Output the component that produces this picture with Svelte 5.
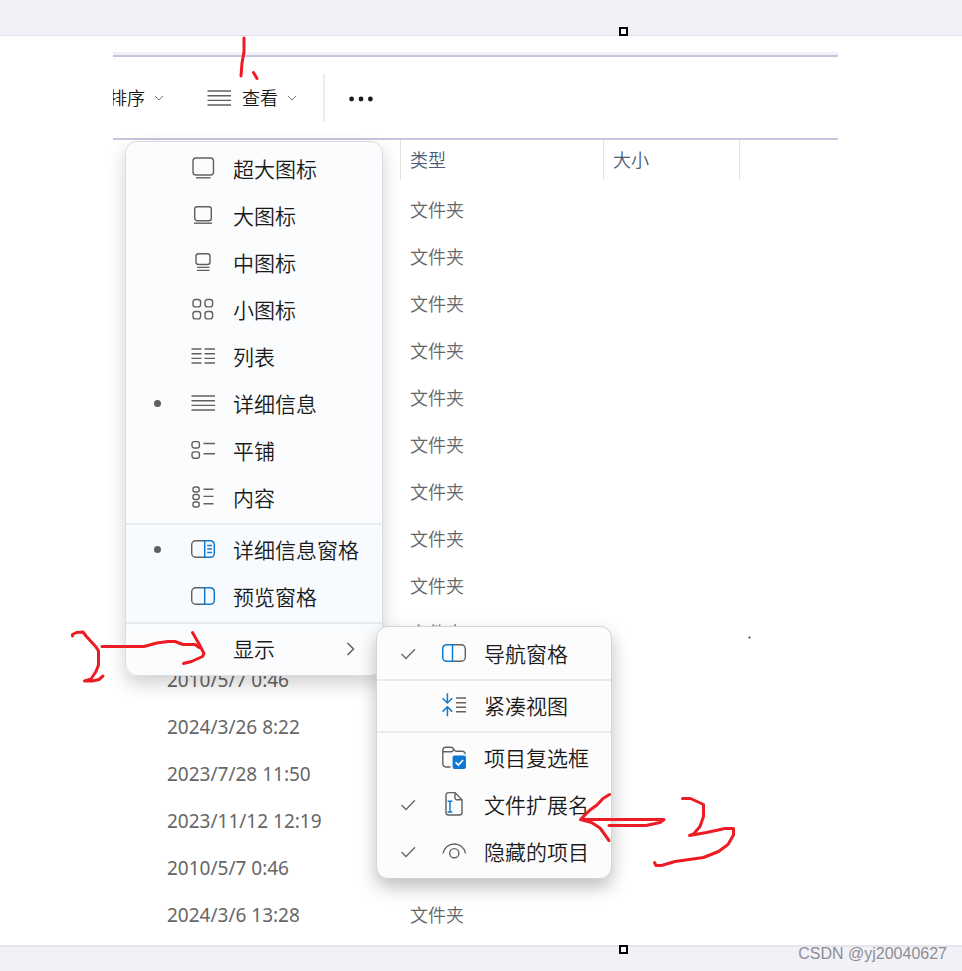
<script lang="ts">
  interface Row {
    date: string;
    type: string;
  }

  interface MenuEntry {
    id: string;
    label: string;
  }

  const dates = ['2010/5/7 0:46', '2024/3/26 8:22', '2023/7/28 11:50', '2023/11/12 12:19', '2010/5/7 0:46', '2024/3/6 13:28'];

  const rows: Row[] = [
    ...Array.from({ length: 10 }, () => ({ date: '', type: '文件夹' })),
    ...dates.map((date) => ({ date, type: '文件夹' })),
  ];

  const layouts: MenuEntry[] = [
    { id: 'extra-large', label: '超大图标' },
    { id: 'large', label: '大图标' },
    { id: 'medium', label: '中图标' },
    { id: 'small', label: '小图标' },
    { id: 'list', label: '列表' },
    { id: 'details', label: '详细信息' },
    { id: 'tiles', label: '平铺' },
    { id: 'content', label: '内容' },
  ];

  const panes: MenuEntry[] = [
    { id: 'details-pane', label: '详细信息窗格' },
    { id: 'preview-pane', label: '预览窗格' },
  ];

  const showGroups: MenuEntry[][] = [
    [{ id: 'nav-pane', label: '导航窗格' }],
    [{ id: 'compact', label: '紧凑视图' }],
    [
      { id: 'checkboxes', label: '项目复选框' },
      { id: 'extensions', label: '文件扩展名' },
      { id: 'hidden-items', label: '隐藏的项目' },
    ],
  ];

  let layout = $state('details');
  let pane = $state('details-pane');
  let shown: Record<string, boolean> = $state({ 'nav-pane': true, extensions: true, 'hidden-items': true });
  let menuOpen = $state(true);
  let submenuOpen = $state(true);

  function togglePane(id: string) {
    pane = pane === id ? '' : id;
  }
</script>

{#snippet chevronDown()}
  <svg class="chevron" viewBox="0 0 10 10" aria-hidden="true"><path d="M1 3l4 4 4-4" /></svg>
{/snippet}

{#snippet icon(name: string)}
  <svg class="icon" viewBox="0 0 25 25" aria-hidden="true">
    {#if name === 'extra-large'}
      <rect x="2" y="1" width="20.5" height="17" rx="3" />
      <path d="M5 20.8h14.5" />
    {:else if name === 'large'}
      <rect x="3.7" y="2.7" width="16.6" height="14" rx="2.5" />
      <path d="M3 19.2h18" />
    {:else if name === 'medium'}
      <rect x="5" y="2.7" width="14" height="10.8" rx="2.5" />
      <path d="M6 16.4h12.5M6 19.4h12.5" />
    {:else if name === 'small'}
      <rect x="2" y="1.5" width="7.6" height="7.4" rx="2.4" />
      <rect x="14" y="1.5" width="7.6" height="7.4" rx="2.4" />
      <rect x="2" y="13.5" width="7.6" height="7.4" rx="2.4" />
      <rect x="14" y="13.5" width="7.6" height="7.4" rx="2.4" />
    {:else if name === 'list'}
      <path d="M.5 4h10M.5 8.7h10M.5 13.4h10M.5 18h10M13.5 4h10.5M13.5 8.7h10.5M13.5 13.4h10.5M13.5 18h10.5" />
    {:else if name === 'details'}
      <path d="M.5 4h23.5M.5 8.7h23.5M.5 13.4h23.5M.5 18h23.5" />
    {:else if name === 'tiles'}
      <rect x="1" y="2.6" width="7.4" height="6.4" rx="2.2" />
      <rect x="1" y="12.9" width="7.4" height="6.4" rx="2.2" />
      <path d="M12.5 4.5H24M12.5 14.7H24" />
    {:else if name === 'content'}
      <rect x="2" y="1" width="6.2" height="5" rx="2" />
      <rect x="2" y="8.5" width="6.2" height="5" rx="2" />
      <rect x="2" y="16" width="6.2" height="5" rx="2" />
      <path d="M12.5 3.2h10M12.5 10.4h10M12.5 17.8h10" />
    {:else if name === 'details-pane' || name === 'preview-pane'}
      <path d="M13.7 2.7H4.7a4 4 0 0 0-4 4v8.6a4 4 0 0 0 4 4h9" />
      <path class="blue" d="M13.7 2.7h5.6a4 4 0 0 1 4 4v8.6a4 4 0 0 1-4 4h-5.6z" />
      {#if name === 'details-pane'}
        <path class="blue" d="M16.2 7.4h4.8M16.2 11h4.8M16.2 14.6h4.8" />
      {/if}
    {:else if name === 'nav-pane'}
      <path d="M10.5 2.7h8.8a4 4 0 0 1 4 4v8.6a4 4 0 0 1-4 4h-8.8" />
      <path class="blue" d="M10.5 2.7H4.7a4 4 0 0 0-4 4v8.6a4 4 0 0 0 4 4h5.8z" />
    {:else if name === 'compact'}
      <path class="blue" d="M5.4-.8v9.6M.6 4.2l4.8 4.8 4.8-4.8M5.4 22.3v-9.4M.6 17.6l4.8-4.8 4.8 4.8" />
      <path d="M14 4h10M14 8.7h10M14 13.3h10M14 17.8h10" />
    {:else if name === 'checkboxes'}
      <path d="M8.5 21H4.2A3.4 3.4 0 0 1 .8 17.6V4.2A3 3 0 0 1 3.8 1.2h5c1 0 1.6.3 2.2 1L13 4.6c.4.5.8.7 1.5.7h5.8a3 3 0 0 1 3 3" />
      <path d="M.8 5.8h8c1 0 1.5-.2 2-.8l1.200-1.200" />
      <rect class="tick-box" x="10.6" y="9.6" width="13.4" height="13.4" rx="2" />
      <path class="tick" d="M13.5 16.2l2.8 2.8 4.8-5" />
    {:else if name === 'extensions'}
      <path d="M13-.4H6.500a2.500 2.500 0 0 0-2.500 2.500v17.400A2.500 2.500 0 0 0 6.500 22h11a2.500 2.500 0 0 0 2.500-2.500V6.800zv5a2.200 2.200 0 0 0 2.200 2.200H20" />
      <path class="blue" d="M8 8.5v10.3M5.6 8.200h4.800M5.600 19h4.800" />
    {:else if name === 'hidden-items'}
      <path d="M1 13.4C2.200 7.600 6.800 4 12.300 4s10.100 3.600 11.300 9.400" />
      <circle cx="12.3" cy="13.2" r="4.6" />
    {/if}
  </svg>
{/snippet}

{#snippet check()}
  <svg class="check" viewBox="0 0 16 12" aria-hidden="true"><path d="M1.5 6l4.5 4.5 9-9.3" /></svg>
{/snippet}

<div class="page">
  <div class="band top">
    <span class="handle"></span>
  </div>

  <main class="shot">
    <div class="explorer">
      <div class="toolbar">
        <button class="tool sort"><span class="label">排序</span>{@render chevronDown()}</button>
        <button class="tool view" aria-haspopup="menu" aria-expanded={menuOpen} onclick={() => (menuOpen = !menuOpen)}>
          {@render icon('details')}
          <span class="label">查看</span>
          {@render chevronDown()}
        </button>
        <button class="tool more" aria-label="更多">
          <svg viewBox="0 0 24 6" aria-hidden="true">
            <circle cx="2.6" cy="3" r="2.4" />
            <circle cx="12" cy="3" r="2.4" />
            <circle cx="21.4" cy="3" r="2.4" />
          </svg>
        </button>
      </div>

      <div class="files">
        <table>
          <colgroup>
            <col class="col-name" />
            <col class="col-date" />
            <col class="col-type" />
            <col class="col-size" />
            <col />
          </colgroup>
          <thead>
            <tr>
              <th><span></span></th>
              <th><span></span></th>
              <th><span>类型</span></th>
              <th><span>大小</span></th>
              <th></th>
            </tr>
          </thead>
          <tbody>
            {#each rows as row}
              <tr>
                <td></td>
                <td class="date">{row.date}</td>
                <td>{row.type}</td>
                <td></td>
                <td></td>
              </tr>
            {/each}
          </tbody>
        </table>

        {#if menuOpen}
          <ul class="menu" role="menu">
            {#each layouts as item}
              <li role="none">
                <button class="item" role="menuitemradio" aria-checked={layout === item.id} onclick={() => (layout = item.id)}>
                  <span class="lead">{#if layout === item.id}<i class="bullet"></i>{/if}</span>
                  {@render icon(item.id)}
                  <span class="label">{item.label}</span>
                </button>
              </li>
            {/each}
            <li class="separator" role="separator"></li>
            {#each panes as item}
              <li role="none">
                <button class="item" role="menuitemradio" aria-checked={pane === item.id} onclick={() => togglePane(item.id)}>
                  <span class="lead">{#if pane === item.id}<i class="bullet"></i>{/if}</span>
                  {@render icon(item.id)}
                  <span class="label">{item.label}</span>
                </button>
              </li>
            {/each}
            <li class="separator" role="separator"></li>
            <li class="parent" role="none">
              <button class="item" role="menuitem" aria-haspopup="menu" aria-expanded={submenuOpen} onclick={() => (submenuOpen = !submenuOpen)}>
                <span class="lead"></span>
                <span class="icon"></span>
                <span class="label">显示</span>
                <svg class="arrow" viewBox="0 0 10 16" aria-hidden="true"><path d="M1.5 2l6 6-6 6" /></svg>
              </button>

              {#if submenuOpen}
                <ul class="menu submenu" role="menu">
                  {#each showGroups as group, i}
                    {#if i > 0}
                      <li class="separator" role="separator"></li>
                    {/if}
                    {#each group as item}
                      <li role="none">
                        <button
                          class="item"
                          role="menuitemcheckbox"
                          aria-checked={!!shown[item.id]}
                          onclick={() => (shown[item.id] = !shown[item.id])}
                        >
                          <span class="lead">{#if shown[item.id]}{@render check()}{/if}</span>
                          {@render icon(item.id)}
                          <span class="label">{item.label}</span>
                        </button>
                      </li>
                    {/each}
                  {/each}
                </ul>
              {/if}
            </li>
          </ul>
        {/if}
      </div>
    </div>
  </main>

  <footer class="band bottom">
    <span class="handle"></span>
    <span class="watermark">CSDN @yj20040627</span>
  </footer>

  <!-- hand-drawn step marks -->
  <svg class="ink" width="962" height="971" viewBox="0 0 962 971" aria-hidden="true">
    <path d="M244 38v14l-2 11-1 13M253.5 72.5l3.5 6" />
    <path d="M72.5 636v-1.500l4-2 6.500-.5 3 4 10 11 2.500 4v14l-2.500 6.500-5 7.500-6.500 2h8l6.500-1.500 4-3.500" />
    <path d="M102 646.5h42l13-3.500 11-1.500h7l8 3h12l4 3M192.500 632.500l6 10.500 5.500 10.500-1.500 3-11 5-8 2" />
    <path d="M609.5 794.5l-6.500 4-6 6.500-7 5-9.500 9.500 11 3 8.500 5.500 9 12.500M580.500 819.500H664l-4 3-14 3h-37" />
    <path d="M682.5 798.5h8l13 6v12l-3.500 10-6.500 7.500-4 1.500 17-3 18.500-4h8.500v6.500l-5.500 9.500-9.500 7-15 6-28.500 4-13.500 4H656l-1.500-3" />
    <circle cx="749.5" cy="637.5" r="1" />
  </svg>
</div>

<style>
  :global(body) {
    margin: 0;
    background: #fff;
  }
  .page {
    position: relative;
    overflow: hidden;
    font-family: 'Noto Sans CJK SC', sans-serif;
    font-weight: 350;
    color: #1a1a1a;
  }
  .page * {
    box-sizing: border-box;
  }
  button {
    padding: 0;
    border: 0;
    background: none;
    font: inherit;
    color: inherit;
    cursor: pointer;
  }

  .band {
    position: relative;
    background: #f1f1f7;
  }
  .band.top {
    height: 36px;
    border-bottom: 1px solid #e2e1e8;
  }
  .band.bottom {
    display: flex;
    justify-content: flex-end;
    height: 26px;
    padding-right: 15px;
    border-top: 2px solid #e6e5ec;
  }
  .handle {
    position: absolute;
    left: 619px;
    width: 9px;
    height: 9px;
    border: 2px solid #000;
    background: #fff;
  }
  .top .handle {
    bottom: -1px;
  }
  .bottom .handle {
    top: -2px;
  }
  .watermark {
    font: 16px/14px 'Liberation Sans', Arial, sans-serif;
    color: #8e8e93;
  }

  .shot {
    padding: 16px 124px 6px 113px;
  }
  .explorer {
    border-top: 3px solid #f2f1f9;
  }
  .toolbar {
    display: flex;
    align-items: center;
    height: 85px;
    overflow: hidden;
    border-top: 2px solid #c8c4dc;
    border-bottom: 2px solid #c8c4dc;
  }
  .tool {
    display: flex;
    align-items: center;
    flex-shrink: 0;
    font-size: 18px;
    line-height: 24px;
    white-space: nowrap;
  }
  .tool .label {
    padding-bottom: 2px;
  }
  .sort {
    gap: 9px;
    margin-left: -4px;
  }
  .view {
    gap: 9px;
    margin-left: 43px;
  }
  .view .icon {
    margin: 3px 1px 0 0;
  }
  .more {
    height: 48px;
    margin-left: 26px;
    padding: 2px 0 0 24px;
    border-left: 2px solid #ececec;
  }
  .more svg {
    width: 24px;
    height: 6px;
    fill: #1a1a1a;
  }

  svg {
    display: block;
    flex-shrink: 0;
    overflow: visible;
    fill: none;
  }
  .chevron {
    width: 10px;
    height: 10px;
    stroke: #777;
  }
  .icon {
    width: 25px;
    height: 25px;
    stroke: #606060;
    stroke-width: 1.4;
  }
  .icon .blue {
    stroke: #0f7bd0;
    stroke-width: 1.5;
  }
  .icon .tick-box {
    fill: #0f78d4;
    stroke: none;
  }
  .icon .tick {
    stroke: #fff;
    stroke-width: 1.6;
  }
  .check {
    width: 16px;
    height: 12px;
    stroke: #666;
    stroke-width: 1.3;
  }
  .arrow {
    width: 10px;
    height: 16px;
    margin: 0 26px 2px auto;
    stroke: #606060;
    stroke-width: 1.5;
  }

  .files {
    position: relative;
  }
  table {
    width: 100%;
    table-layout: fixed;
    border-collapse: collapse;
    font-size: 18px;
    line-height: 24px;
    color: #666;
  }
  .col-name { width: 45px; }
  .col-date { width: 243px; }
  .col-type { width: 203px; }
  .col-size { width: 136px; }
  th {
    height: 47px;
    padding: 0;
    font-weight: 350;
    text-align: left;
    vertical-align: top;
    color: #4a5d78;
  }
  th span {
    display: block;
    height: 40px;
    padding: 7px 9px;
    border-right: 1px solid #e2e2e2;
  }
  td {
    height: 47px;
    padding: 0 9px 4px;
    white-space: nowrap;
  }
  .date {
    padding-bottom: 2px;
    font-family: 'Noto Sans', sans-serif;
    font-size: 19px;
    font-weight: 400;
  }

  .menu {
    position: absolute;
    top: 1px;
    left: 12px;
    z-index: 1;
    width: 258px;
    margin: 0;
    padding: 4px 0 2px;
    list-style: none;
    border: 1px solid #dcdde0;
    border-radius: 12px;
    background: linear-gradient(#fbfcfd 70%, #f7fbff 76%, #f7fbff 88%, #fbfcfd 94%);
    box-shadow: 0 8px 18px rgba(0, 0, 0, 0.18);
  }
  .submenu {
    top: 0;
    left: 250px;
    width: 236px;
    border-color: #d4d4d6;
    background: #fcfcfc;
    box-shadow: 0 8px 18px rgba(0, 0, 0, 0.26);
  }
  .parent {
    position: relative;
  }
  .separator {
    height: 2px;
    margin: 1px 0 2px;
    background: #e8ebee;
  }
  .item {
    display: flex;
    align-items: center;
    width: 100%;
    height: 47px;
    font-size: 21px;
    line-height: 28px;
    white-space: nowrap;
  }
  .item .icon {
    margin-right: 17px;
  }
  .item .label {
    padding-bottom: 4px;
  }
  .lead {
    display: flex;
    justify-content: center;
    flex-shrink: 0;
    width: 62px;
    margin-right: 3px;
    padding-bottom: 2px;
  }
  .bullet {
    width: 7px;
    height: 7px;
    border-radius: 50%;
    background: #606060;
  }

  .ink {
    position: absolute;
    top: 0;
    left: 0;
    z-index: 2;
    pointer-events: none;
    stroke: #ed1c24;
    stroke-width: 3;
    stroke-linecap: round;
    stroke-linejoin: round;
  }
  .ink circle {
    fill: #333;
    stroke: none;
  }
</style>
